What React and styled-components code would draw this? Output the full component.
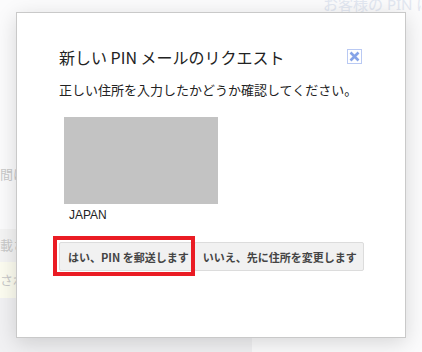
import React from 'react';
import styled, { createGlobalStyle } from 'styled-components';

const GlobalStyle = createGlobalStyle`
body{
    margin: 0;
    font-family: "Noto Sans", "Noto Sans CJK JP", sans-serif;
    background: #fbfbfc;
}
`;

const Page = styled.div`
position: relative;
width: 422px;
height: 352px;
overflow: hidden;
background: #fbfbfc;
`;

const PageHeader = styled.div`
margin-top: -5px;
padding-left: 323px;
font-size: 15px;
line-height: 18px;
color: #e2e7f1;
white-space: nowrap;
`;

const PageColumn = styled.div`
width: 252px;
margin-top: 149px;
font-size: 13px;
color: #c9c9c9;
`;

const FaintLine = styled.div`
height: ${p => p.h}px;
line-height: ${p => p.h}px;
background: ${p => p.bg || 'transparent'};
white-space: nowrap;
`;

const Dialog = styled.div`
position: absolute;
left: 16px;
top: 12px;
width: 390px;
height: 326px;
box-sizing: border-box;
background: #fff;
border: 1px solid #c9c9c9;
box-shadow: 0 5px 20px rgba(0, 0, 0, 0.15);
padding: 34px 43px 0 42px;
color: #222;
`;

const TitleRow = styled.div`
display: flex;
justify-content: space-between;
align-items: center;
`;

const Title = styled.div`
font-size: 16px;
line-height: 20px;
font-family: "Noto Sans CJK JP", sans-serif;
`;

const CloseButton = styled.div`
width: 15px;
height: 15px;
box-sizing: border-box;
border: 1px solid #b9c9f3;
display: flex;
align-items: center;
justify-content: center;
margin-top: -1px;
`;

const Message = styled.div`
margin-top: 14px;
font-size: 13px;
line-height: 18px;
font-family: "Noto Sans CJK JP", sans-serif;
`;

const MapBox = styled.div`
margin: 18px 0 0 5px;
width: 154px;
height: 87px;
background: #c3c3c3;
`;

const Country = styled.div`
margin: 4px 0 0 10px;
font-family: "Liberation Sans", Arial, sans-serif;
font-size: 12px;
line-height: 14px;
color: #222;
`;

const ButtonRow = styled.div`
margin-top: 20px;
display: flex;
`;

const ButtonWrap = styled.div`
position: relative;
`;

const Button = styled.div`
height: 27px;
padding: 0 ${p => p.pr}px 0 8px;
display: flex;
align-items: center;
background: #f1f1f1;
border: 1px solid #dcdcdc;
border-radius: 2px;
font-family: "Noto Sans CJK JP", sans-serif;
font-weight: 700;
font-size: 11px;
color: #444;
white-space: nowrap;
`;

const Highlight = styled.div`
position: absolute;
left: -6px;
right: -1px;
top: -6px;
bottom: -5px;
border: 4px solid #ea1c24;
`;

const App = () => {
    return (
        <Page>
            <GlobalStyle />
            <PageHeader>お客様の PIN は</PageHeader>
            <PageColumn>
                <FaintLine h={24}>間は</FaintLine>
                <FaintLine h={43} />
                <FaintLine h={33} bg="#f4f4f4">載さ</FaintLine>
                <FaintLine h={36} bg="#fcfcf0">され</FaintLine>
                <FaintLine h={60} bg="#f1f1f3" />
            </PageColumn>
            <Dialog>
                <TitleRow>
                    <Title>新しい PIN メールのリクエスト</Title>
                    <CloseButton>
                        <svg width="11" height="11" viewBox="0 0 11 11">
                            <path d="M1.5 1.5 L9.5 9.5 M9.5 1.5 L1.5 9.5" stroke="#86a4e8" strokeWidth="2.6" />
                        </svg>
                    </CloseButton>
                </TitleRow>
                <Message>正しい住所を入力したかどうか確認してください。</Message>
                <MapBox />
                <Country>JAPAN</Country>
                <ButtonRow>
                    <ButtonWrap>
                        <Button pr={4}>はい、PIN を郵送します</Button>
                        <Highlight />
                    </ButtonWrap>
                    <Button pr={6}>いいえ、先に住所を変更します</Button>
                </ButtonRow>
            </Dialog>
        </Page>
    )
}

export default App
